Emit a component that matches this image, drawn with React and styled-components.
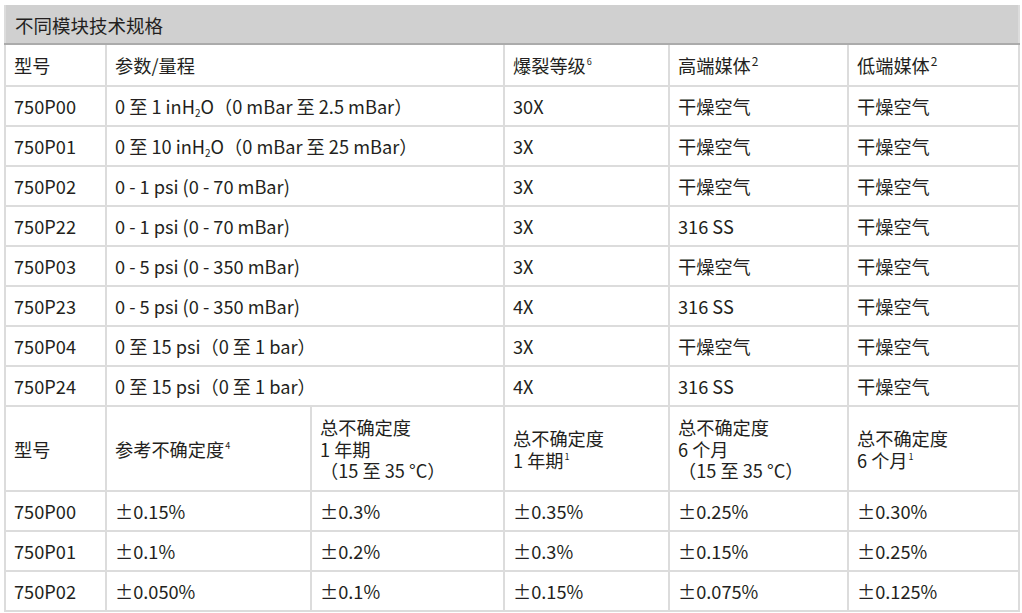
import React from "react";
import styled, { createGlobalStyle } from "styled-components";

const Global = createGlobalStyle`
    body {
        margin: 0;
        background: #fff;
        font-family: "Noto Sans CJK SC", "Noto Sans", sans-serif;
        color: #231f20;
    }
`;

const Page = styled.div`
    padding: 5px 4px;
`;
const Table = styled.table`
    width: 1014px;
    table-layout: fixed;
    border-collapse: collapse;
    border-left: 2px solid #dcdcdc;
    border-right: 2px solid #dcdcdc;
    border-bottom: 2px solid #dcdcdc;
`;
const Caption = styled.td`
    background: #d0d0d0;
    border-bottom: 2px solid #ababab;
    padding: 1px 9px 0;
    font-size: 18.5px;
    line-height: 22px;
    text-align: left;
`;
const Cell = styled.td`
    border: 2px solid #dcdcdc;
    padding: 2px 8px 0;
    font-size: 18.2px;
    line-height: 21.5px;
    vertical-align: middle;
    text-align: left;
    white-space: nowrap;
`;
const Row = styled.tr`
    height: ${(p) => p.$h || 40}px;
`;
const Sup = styled.sup`
    font-size: ${(p) => (p.$big ? "12px" : "9px")};
    line-height: 0;
    vertical-align: ${(p) => (p.$big ? "7px" : "8px")};
    margin-left: 1px;
`;
const Sub = styled.sub`
    font-size: 10px;
    line-height: 0;
    vertical-align: -3px;
`;

const ranges = [
    ["750P00", <>0 至 1 inH<Sub>2</Sub>O（0 mBar 至 2.5 mBar）</>, "30X", "干燥空气", "干燥空气"],
    ["750P01", <>0 至 10 inH<Sub>2</Sub>O（0 mBar 至 25 mBar）</>, "3X", "干燥空气", "干燥空气"],
    ["750P02", "0 - 1 psi (0 - 70 mBar)", "3X", "干燥空气", "干燥空气"],
    ["750P22", "0 - 1 psi (0 - 70 mBar)", "3X", "316 SS", "干燥空气"],
    ["750P03", "0 - 5 psi (0 - 350 mBar)", "3X", "干燥空气", "干燥空气"],
    ["750P23", "0 - 5 psi (0 - 350 mBar)", "4X", "316 SS", "干燥空气"],
    ["750P04", "0 至 15 psi（0 至 1 bar）", "3X", "干燥空气", "干燥空气"],
    ["750P24", "0 至 15 psi（0 至 1 bar）", "4X", "316 SS", "干燥空气"],
];

const accuracy = [
    ["750P00", "±0.15%", "±0.3%", "±0.35%", "±0.25%", "±0.30%"],
    ["750P01", "±0.1%", "±0.2%", "±0.3%", "±0.15%", "±0.25%"],
    ["750P02", "±0.050%", "±0.1%", "±0.15%", "±0.075%", "±0.125%"],
];

function App() {
    return (
        <Page>
            <Global />
            <Table>
                <colgroup>
                    <col style={{ width: 101 }} />
                    <col style={{ width: 205 }} />
                    <col style={{ width: 193 }} />
                    <col style={{ width: 165 }} />
                    <col style={{ width: 179 }} />
                    <col style={{ width: 171 }} />
                </colgroup>
                <tbody>
                    <Row $h={39}>
                        <Caption colSpan={6}>不同模块技术规格</Caption>
                    </Row>
                    <Row $h={42}>
                        <Cell>型号</Cell>
                        <Cell colSpan={2}>参数/量程</Cell>
                        <Cell>
                            爆裂等级<Sup>6</Sup>
                        </Cell>
                        <Cell>
                            高端媒体<Sup $big>2</Sup>
                        </Cell>
                        <Cell>
                            低端媒体<Sup $big>2</Sup>
                        </Cell>
                    </Row>
                    {ranges.map((r) => (
                        <Row key={r[0]}>
                            <Cell>{r[0]}</Cell>
                            <Cell colSpan={2}>{r[1]}</Cell>
                            <Cell>{r[2]}</Cell>
                            <Cell>{r[3]}</Cell>
                            <Cell>{r[4]}</Cell>
                        </Row>
                    ))}
                    <Row $h={85}>
                        <Cell>型号</Cell>
                        <Cell>
                            参考不确定度<Sup>4</Sup>
                        </Cell>
                        <Cell>
                            总不确定度
                            <br />1 年期
                            <br />（15 至 35 °C）
                        </Cell>
                        <Cell>
                            总不确定度
                            <br />1 年期<Sup>1</Sup>
                        </Cell>
                        <Cell>
                            总不确定度
                            <br />6 个月
                            <br />（15 至 35 °C）
                        </Cell>
                        <Cell>
                            总不确定度
                            <br />6 个月<Sup>1</Sup>
                        </Cell>
                    </Row>
                    {accuracy.map((r) => (
                        <Row key={r[0]}>
                            {r.map((v, i) => (
                                <Cell key={i}>{v}</Cell>
                            ))}
                        </Row>
                    ))}
                </tbody>
            </Table>
        </Page>
    );
}

export default App;
